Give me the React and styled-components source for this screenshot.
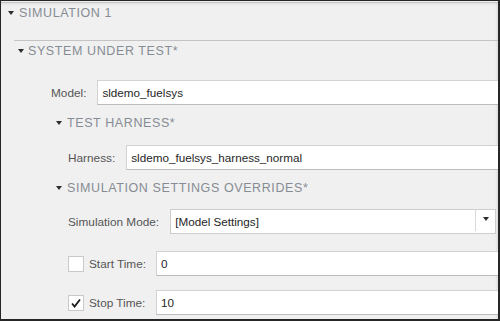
import React from "react";
import styled, { createGlobalStyle } from "styled-components";

const Global = createGlobalStyle`
  html, body { margin: 0; padding: 0; background: #ffffff; }
  * { box-sizing: border-box; }
`;

const Frame = styled.div`
  width: 500px;
  height: 321px;
  border-style: solid;
  border-color: #262626;
  border-width: 1px 2px 2px 1px;
  overflow: hidden;
  background: #f0f0f0;
  font-family: "Liberation Sans", Arial, sans-serif;
`;

const Panel = styled.div`
  height: 100%;
  margin-top: 1px;
  border-top: 1px solid #c6c6c6;
  position: relative;
  overflow: hidden;
  box-shadow: inset 0 3px 3px -2px rgba(0, 0, 0, 0.08),
    inset -3px 0 3px -2px rgba(0, 0, 0, 0.1);
`;

const Header = styled.div`
  display: flex;
  align-items: center;
  height: 20px;
  gap: ${(p) => p.$gap || 5}px;
  padding-left: ${(p) => p.$pad || 0}px;
  margin-top: ${(p) => p.$mt || 0}px;
  color: #868c94;
  font-size: 12.5px;
  letter-spacing: 0.6px;
  white-space: nowrap;
`;

const Caret = styled.span`
  width: 0;
  height: 0;
  border-left: 3.5px solid transparent;
  border-right: 3.5px solid transparent;
  border-top: 4px solid #2d2d2d;
  flex: none;
`;

const Section = styled.div`
  margin-left: ${(p) => p.$ml}px;
  margin-top: ${(p) => p.$mt || 0}px;
  border-top: ${(p) => (p.$rule ? "1px solid #c4c4c4" : "none")};
`;

const Row = styled.div`
  display: flex;
  align-items: center;
  height: 25px;
  margin-top: ${(p) => p.$mt}px;
  padding-left: ${(p) => p.$pad}px;
  gap: ${(p) => p.$gap}px;
`;

const Label = styled.span`
  color: #555555;
  font-size: 11.8px;
  white-space: nowrap;
  flex: none;
`;

const Input = styled.div`
  flex: 1;
  height: 25px;
  margin-right: -4px;
  background: #ffffff;
  border: 1px solid #d2d2d2;
  border-bottom-color: #bcbcbc;
  display: flex;
  align-items: center;
  padding-left: 4px;
  color: #262626;
  font-size: 11.7px;
  white-space: nowrap;
`;

const Select = styled.div`
  flex: 1;
  height: 25px;
  margin-right: 2px;
  background: #ffffff;
  border: 1px solid #cdcdcd;
  display: flex;
  align-items: stretch;
  color: #262626;
  font-size: 11.7px;
`;

const SelectText = styled.span`
  flex: 1;
  display: flex;
  align-items: center;
  padding-left: 4px;
`;

const SelectButton = styled.span`
  width: 20px;
  display: flex;
  align-items: center;
  justify-content: center;
  padding-bottom: 3px;
  margin-bottom: 2px;
  border-left: 1px solid #d9d9d9;
`;

const Check = styled.span`
  width: 16px;
  height: 16px;
  flex: none;
  background: #ffffff;
  border: 1px solid #c9c9c9;
  display: flex;
  align-items: center;
  justify-content: center;
`;

const CheckGroup = styled.div`
  display: flex;
  align-items: center;
  gap: 5px;
  width: 78px;
  flex: none;
`;

export default function App() {
  return (
    <>
      <Global />
      <Frame>
        <Panel>
          <Header $pad={7} $gap={5}>
            <Caret />
            SIMULATION 1
          </Header>
          <Section $ml={13} $mt={17} $rule>
            <Header $pad={4} $gap={4}>
              <Caret />
              SYSTEM UNDER TEST*
            </Header>
            <Row $mt={19} $pad={37} $gap={11}>
              <Label>Model:</Label>
              <Input>sldemo_fuelsys</Input>
            </Row>
            <Section $ml={42}>
              <Header $mt={8} $gap={5}>
                <Caret />
                TEST HARNESS*
              </Header>
              <Row $mt={12} $pad={12} $gap={11}>
                <Label>Harness:</Label>
                <Input>sldemo_fuelsys_harness_normal</Input>
              </Row>
              <Header $mt={8} $gap={5}>
                <Caret />
                SIMULATION SETTINGS OVERRIDES*
              </Header>
              <Row $mt={11} $pad={12} $gap={11}>
                <Label>Simulation Mode:</Label>
                <Select>
                  <SelectText>[Model Settings]</SelectText>
                  <SelectButton>
                    <Caret />
                  </SelectButton>
                </Select>
              </Row>
              <Row $mt={17} $pad={12} $gap={10}>
                <CheckGroup>
                  <Check />
                  <Label>Start Time:</Label>
                </CheckGroup>
                <Input>0</Input>
              </Row>
              <Row $mt={14} $pad={12} $gap={10}>
                <CheckGroup>
                  <Check>
                    <svg width="12" height="12" viewBox="0 0 12 12">
                      <path
                        d="M2 6.5 L4.6 9.5 L10 2.5"
                        fill="none"
                        stroke="#1a1a1a"
                        strokeWidth="1.8"
                      />
                    </svg>
                  </Check>
                  <Label>Stop Time:</Label>
                </CheckGroup>
                <Input>10</Input>
              </Row>
            </Section>
          </Section>
        </Panel>
      </Frame>
    </>
  );
}
